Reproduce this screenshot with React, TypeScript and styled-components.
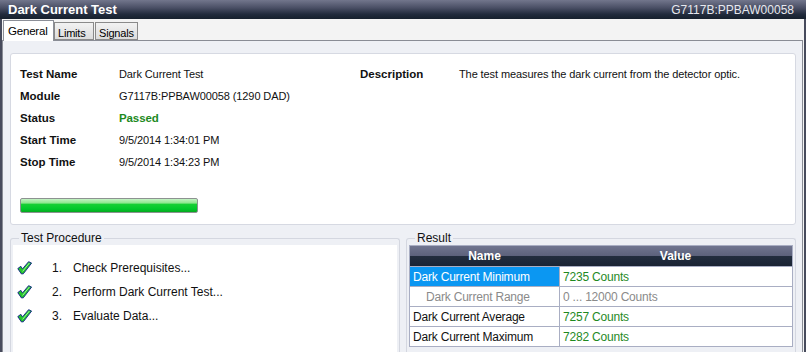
import styled, { createGlobalStyle } from 'styled-components'

const GlobalStyle = createGlobalStyle`
  html, body {
    margin: 0;
    padding: 0;
    background: #f2f2f2;
  }
  body {
    font-family: "Liberation Sans", Arial, sans-serif;
    font-size: 11px;
    color: #000;
  }
`

const Window = styled.div`
  width: 806px;
  height: 352px;
  display: flex;
  flex-direction: column;
  overflow: hidden;
`

const TitleBar = styled.div`
  height: 19px;
  flex: 0 0 19px;
  display: flex;
  align-items: center;
  justify-content: space-between;
  padding: 0 12px 0 8px;
  background: linear-gradient(#72768c 0%, #4b5066 40%, #212b3c 75%, #16202d 100%);
  color: #fff;
`

const Title = styled.div`
  font-size: 13px;
  font-weight: 700;
`

const ModuleId = styled.div`
  font-size: 12px;
  color: #e6e8ee;
`

const Body = styled.div`
  flex: 1;
  display: flex;
  flex-direction: column;
  border-left: 2px solid #474b5c;
  border-right: 2px solid #474b5c;
  background: #f3f3f3;
`

const TabStrip = styled.div`
  height: 21px;
  display: flex;
  align-items: flex-end;
  padding-left: 1px;
  position: relative;
  z-index: 1;
`

const Tab = styled.div<{ $active?: boolean; $width: number }>`
  box-sizing: border-box;
  width: ${p => p.$width}px;
  height: ${p => (p.$active ? '21px' : '18px')};
  margin-bottom: ${p => (p.$active ? '-1px' : '0')};
  margin-right: ${p => (p.$active ? '0' : '1px')};
  padding: ${p => (p.$active ? '3px 0 0 4px' : '3px 0 0 3px')};
  border: 1px solid ${p => (p.$active ? '#8c8f98' : '#8a8a8a')};
  border-bottom: ${p => (p.$active ? 'none' : '1px solid #8a8a8a')};
  background: ${p => (p.$active ? '#ffffff' : 'linear-gradient(#f2f2f2, #dcdcdc)')};
  font-size: ${p => (p.$active ? '11.5px' : '11px')};
  line-height: 14px;
  letter-spacing: -0.2px;
`

const Panel = styled.div`
  flex: 1;
  margin-right: 1px;
  border: 1px solid #898c95;
  border-bottom: none;
  background: #eef0f5;
  padding: 12px 6px 0 7px;
  display: flex;
  flex-direction: column;
`

const InfoCard = styled.div`
  box-sizing: border-box;
  height: 172px;
  flex: 0 0 172px;
  background: #fff;
  border: 1px solid #d6d9e2;
  border-radius: 3px;
  padding: 9px 9px 0 9px;
  display: flex;
  flex-direction: column;
`

const InfoColumns = styled.div`
  display: flex;
`

const InfoGrid = styled.div<{ $width: number }>`
  width: ${p => p.$width}px;
  display: grid;
  grid-template-columns: 99px 1fr;
  grid-auto-rows: 22px;
  align-items: center;
`

const Label = styled.div`
  font-weight: 700;
  font-size: 11.5px;
  color: #111;
`

const Value = styled.div<{ $ok?: boolean }>`
  color: ${p => (p.$ok ? '#1d8a1d' : '#111')};
  font-weight: ${p => (p.$ok ? 700 : 400)};
  font-size: ${p => (p.$ok ? '11.5px' : '11px')};
  letter-spacing: -0.1px;
`

const Progress = styled.div`
  margin-top: 25px;
  width: 176px;
  height: 13px;
  border: 1px solid #8d9291;
  border-radius: 2px;
  background: linear-gradient(#c4f2c4 0%, #8fe78f 30%, #16cf34 42%, #00c82a 78%, #07a61f 100%);
`

const Groups = styled.div`
  flex: 1;
  display: flex;
  gap: 6px;
  margin-top: 6px;
  align-items: stretch;
`

const Group = styled.fieldset<{ $width: number }>`
  width: ${p => p.$width}px;
  box-sizing: border-box;
  margin: 0;
  padding: 0 2px;
  border: 1px solid #d4d7e0;
  border-bottom: none;
  border-radius: 3px 3px 0 0;
  min-width: 0;
  display: flex;
  flex-direction: column;
`

const GroupTitle = styled.legend`
  margin-left: 6px;
  padding: 0 2px;
  font-size: 12px;
  line-height: 14px;
  color: #111;
`

const ProcedureList = styled.div`
  flex: 1;
  background: #fff;
  margin-top: 0;
  padding: 11px 0 0 4px;
`

const Step = styled.div`
  height: 24px;
  display: flex;
  align-items: center;
  font-size: 12px;
  color: #111;
`

const CheckSlot = styled.div`
  width: 35px;
  display: flex;
  align-items: center;
`

const StepNo = styled.span`
  width: 21px;
`

const Table = styled.div`
  margin-top: 0;
  border: 1px solid #a9aec3;
  display: grid;
  grid-template-columns: 149px 1fr;
  grid-auto-rows: 20px;
`

const HeadCell = styled.div`
  display: flex;
  align-items: center;
  justify-content: center;
  font-weight: 700;
  font-size: 12px;
  color: #fff;
  background: linear-gradient(#70758f 0%, #5d627c 48%, #222d3e 52%, #1a2434 100%);
`

const Cell = styled.div<{ $selected?: boolean; $muted?: boolean; $indent?: boolean; $green?: boolean }>`
  display: flex;
  align-items: center;
  box-sizing: border-box;
  padding-left: ${p => (p.$indent ? '16px' : '3px')};
  font-size: 12px;
  letter-spacing: -0.2px;
  border-top: 1px solid #a9aec3;
  background: ${p => (p.$selected ? '#0b97f2' : '#fff')};
  color: ${p => (p.$selected ? '#fff' : p.$muted ? '#8a8a8a' : p.$green ? '#1f8a1f' : '#111')};
  &:nth-child(even) {
    border-left: 1px solid #a9aec3;
  }
`

const Check = () => (
  <svg width="15" height="14" viewBox="0 0 15 14">
    <path
      d="M0.8 7.6 L3.8 5.3 L5.5 7.9 L11.6 0.7 L14.6 2.1 L6.3 12.8 L4.4 12.9 Z"
      fill="#22c32a"
      stroke="#1c2c8c"
      strokeWidth="1"
      strokeLinejoin="round"
    />
    <path d="M5.6 10.4 L12.4 2" stroke="#9af29a" strokeWidth="1" />
  </svg>
)

const steps = ['Check Prerequisites...', 'Perform Dark Current Test...', 'Evaluate Data...']

const results = [
  { name: 'Dark Current Minimum', value: '7235 Counts', selected: true },
  { name: 'Dark Current Range', value: '0 ... 12000 Counts', muted: true },
  { name: 'Dark Current Average', value: '7257 Counts' },
  { name: 'Dark Current Maximum', value: '7282 Counts' },
]

export default function App() {
  return (
    <>
      <GlobalStyle />
      <Window>
        <TitleBar>
          <Title>Dark Current Test</Title>
          <ModuleId>G7117B:PPBAW00058</ModuleId>
        </TitleBar>
        <Body>
          <TabStrip>
            <Tab $active $width={51}>General</Tab>
            <Tab $width={40}>Limits</Tab>
            <Tab $width={43}>Signals</Tab>
          </TabStrip>
          <Panel>
            <InfoCard>
              <InfoColumns>
                <InfoGrid $width={340}>
                  <Label>Test Name</Label>
                  <Value>Dark Current Test</Value>
                  <Label>Module</Label>
                  <Value>G7117B:PPBAW00058 (1290 DAD)</Value>
                  <Label>Status</Label>
                  <Value $ok>Passed</Value>
                  <Label>Start Time</Label>
                  <Value>9/5/2014 1:34:01 PM</Value>
                  <Label>Stop Time</Label>
                  <Value>9/5/2014 1:34:23 PM</Value>
                </InfoGrid>
                <InfoGrid $width={420}>
                  <Label>Description</Label>
                  <Value>The test measures the dark current from the detector optic.</Value>
                </InfoGrid>
              </InfoColumns>
              <Progress />
            </InfoCard>
            <Groups>
              <Group $width={391}>
                <GroupTitle>Test Procedure</GroupTitle>
                <ProcedureList>
                  {steps.map((s, i) => (
                    <Step key={s}>
                      <CheckSlot>
                        <Check />
                      </CheckSlot>
                      <StepNo>{i + 1}.</StepNo>
                      <span>{s}</span>
                    </Step>
                  ))}
                </ProcedureList>
              </Group>
              <Group $width={391}>
                <GroupTitle>Result</GroupTitle>
                <Table>
                  <HeadCell>Name</HeadCell>
                  <HeadCell>Value</HeadCell>
                  {results.map(r => (
                    <>
                      <Cell key={r.name} $selected={r.selected} $muted={r.muted} $indent={r.muted}>
                        {r.name}
                      </Cell>
                      <Cell key={r.value} $muted={r.muted} $green={!r.muted}>
                        {r.value}
                      </Cell>
                    </>
                  ))}
                </Table>
              </Group>
            </Groups>
          </Panel>
        </Body>
      </Window>
    </>
  )
}
